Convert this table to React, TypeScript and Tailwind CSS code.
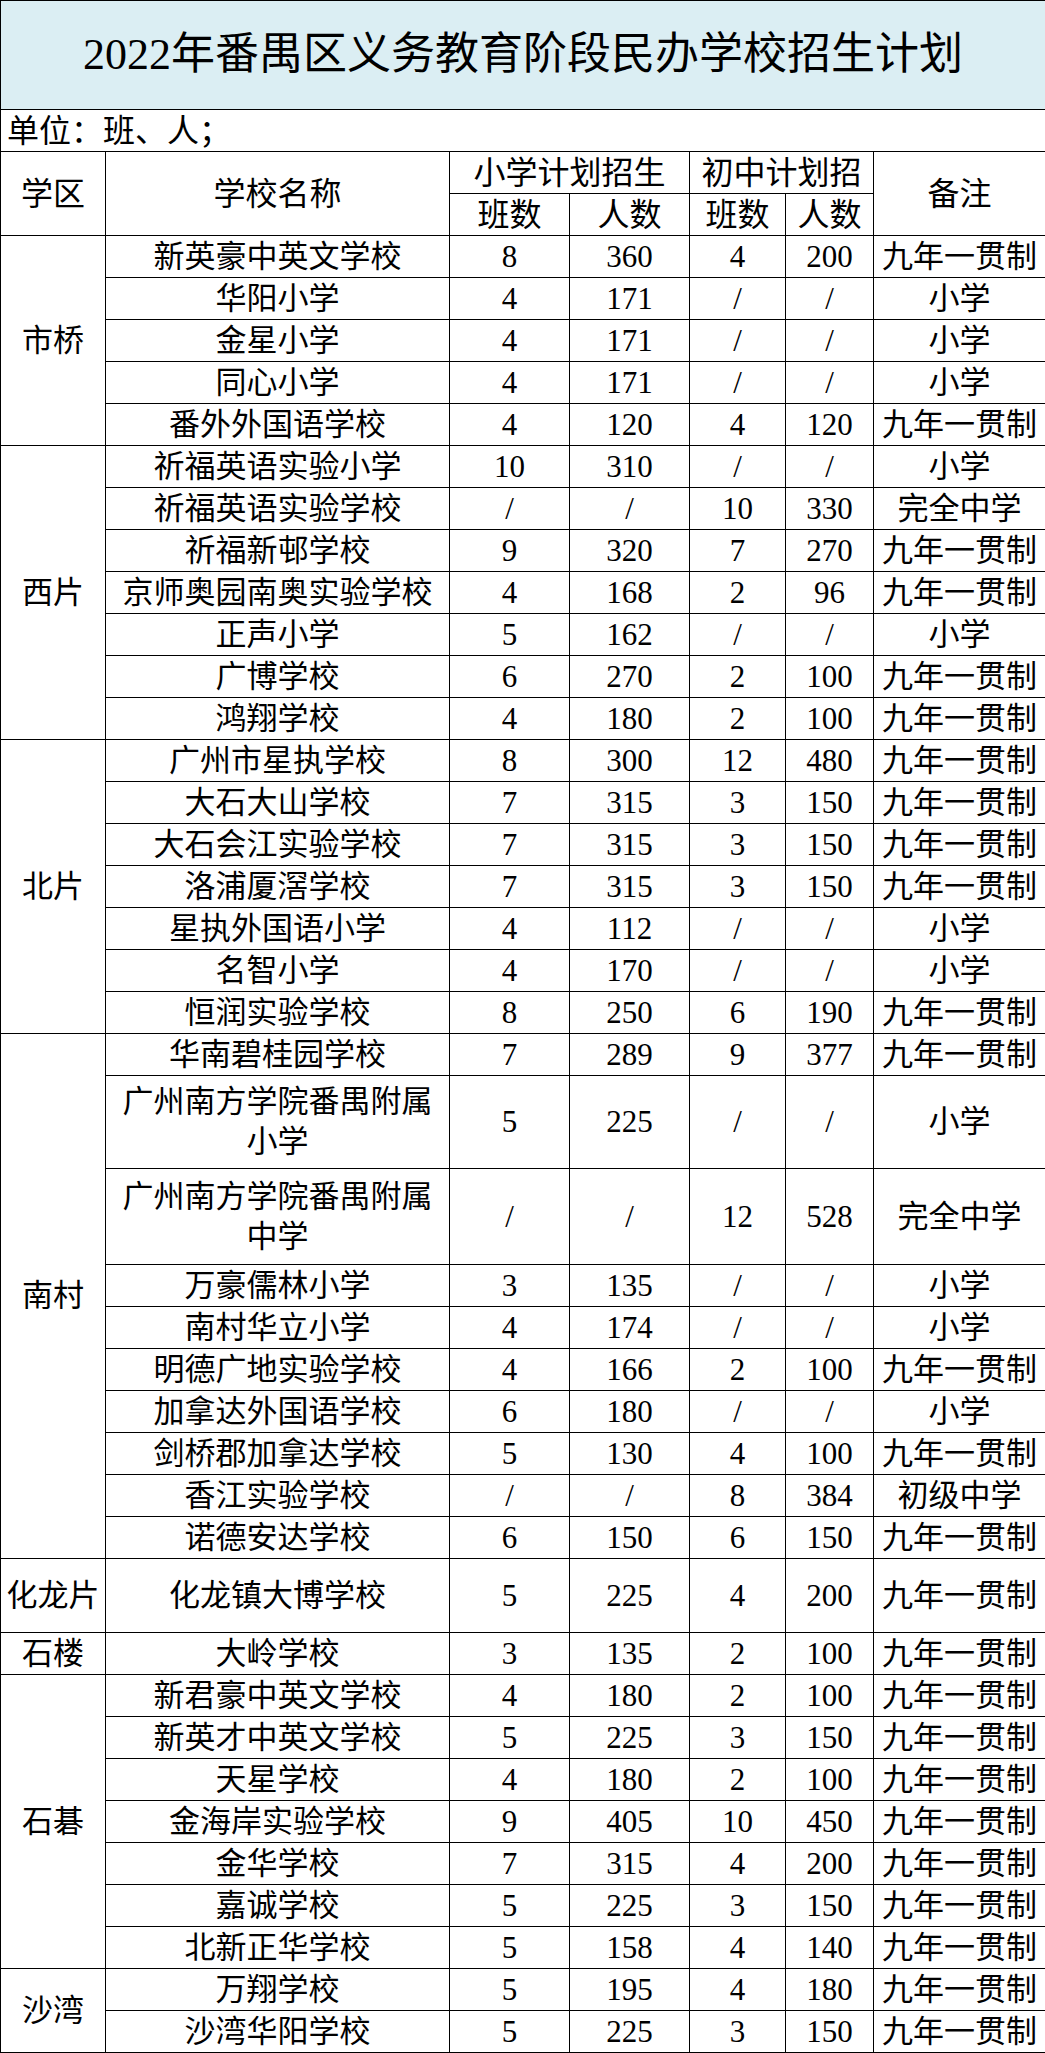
import React from "react";

type Row = { n: React.ReactNode; a: string; b: string; c: string; d: string; note: string; h?: string };
type Group = { district: string; rows: Row[] };

const R = (n: React.ReactNode, a: string, b: string, c: string, d: string, note: string, h?: string): Row => ({ n, a, b, c, d, note, h });
const NY = "九年一贯制";
const XX = "小学";

const groups: Group[] = [
  {
    district: "市桥",
    rows: [
      R("新英豪中英文学校", "8", "360", "4", "200", NY),
      R("华阳小学", "4", "171", "/", "/", XX),
      R("金星小学", "4", "171", "/", "/", XX),
      R("同心小学", "4", "171", "/", "/", XX),
      R("番外外国语学校", "4", "120", "4", "120", NY),
    ],
  },
  {
    district: "西片",
    rows: [
      R("祈福英语实验小学", "10", "310", "/", "/", XX),
      R("祈福英语实验学校", "/", "/", "10", "330", "完全中学"),
      R("祈福新邨学校", "9", "320", "7", "270", NY),
      R("京师奥园南奥实验学校", "4", "168", "2", "96", NY),
      R("正声小学", "5", "162", "/", "/", XX),
      R("广博学校", "6", "270", "2", "100", NY),
      R("鸿翔学校", "4", "180", "2", "100", NY),
    ],
  },
  {
    district: "北片",
    rows: [
      R("广州市星执学校", "8", "300", "12", "480", NY),
      R("大石大山学校", "7", "315", "3", "150", NY),
      R("大石会江实验学校", "7", "315", "3", "150", NY),
      R("洛浦厦滘学校", "7", "315", "3", "150", NY),
      R("星执外国语小学", "4", "112", "/", "/", XX),
      R("名智小学", "4", "170", "/", "/", XX),
      R("恒润实验学校", "8", "250", "6", "190", NY),
    ],
  },
  {
    district: "南村",
    rows: [
      R("华南碧桂园学校", "7", "289", "9", "377", NY),
      R(<>广州南方学院番禺附属<br />小学</>, "5", "225", "/", "/", XX, "h-[93px]"),
      R(<>广州南方学院番禺附属<br />中学</>, "/", "/", "12", "528", "完全中学", "h-[96px]"),
      R("万豪儒林小学", "3", "135", "/", "/", XX),
      R("南村华立小学", "4", "174", "/", "/", XX),
      R("明德广地实验学校", "4", "166", "2", "100", NY),
      R("加拿达外国语学校", "6", "180", "/", "/", XX),
      R("剑桥郡加拿达学校", "5", "130", "4", "100", NY),
      R("香江实验学校", "/", "/", "8", "384", "初级中学"),
      R("诺德安达学校", "6", "150", "6", "150", NY),
    ],
  },
  {
    district: "化龙片",
    rows: [R("化龙镇大博学校", "5", "225", "4", "200", NY, "h-[74px]")],
  },
  {
    district: "石楼",
    rows: [R("大岭学校", "3", "135", "2", "100", NY)],
  },
  {
    district: "石碁",
    rows: [
      R("新君豪中英文学校", "4", "180", "2", "100", NY),
      R("新英才中英文学校", "5", "225", "3", "150", NY),
      R("天星学校", "4", "180", "2", "100", NY),
      R("金海岸实验学校", "9", "405", "10", "450", NY),
      R("金华学校", "7", "315", "4", "200", NY),
      R("嘉诚学校", "5", "225", "3", "150", NY),
      R("北新正华学校", "5", "158", "4", "140", NY),
    ],
  },
  {
    district: "沙湾",
    rows: [
      R("万翔学校", "5", "195", "4", "180", NY),
      R("沙湾华阳学校", "5", "225", "3", "150", NY),
    ],
  },
];

const td = "border border-black p-0 text-center align-middle leading-[40px] whitespace-nowrap overflow-hidden";
const th = "border border-black p-0 text-center align-middle leading-[40px] text-[32px] font-normal whitespace-nowrap overflow-hidden";

export default function App() {
  return (
    <div className="w-[1045px] bg-white text-black font-['Liberation_Serif','Noto_Sans_CJK_SC',serif]">
      <table className="w-[1045px] table-fixed border-collapse text-[31px]">
        <colgroup>
          <col className="w-[105px]" />
          <col className="w-[344px]" />
          <col className="w-[120px]" />
          <col className="w-[120px]" />
          <col className="w-[96px]" />
          <col className="w-[88px]" />
          <col className="w-[172px]" />
        </colgroup>
        <tbody>
          <tr className="h-[109px]">
            <td colSpan={7} className="border border-black bg-[#dbeef3] p-0 text-center align-middle text-[44px] leading-[50px]">
              2022年番禺区义务教育阶段民办学校招生计划
            </td>
          </tr>
          <tr className="h-[42px]">
            <td colSpan={7} className="border border-black p-0 pl-[6px] text-left align-middle text-[32px] leading-[40px]">
              单位：班、人；
            </td>
          </tr>
          <tr className="h-[42px]">
            <th rowSpan={2} className={th}>学区</th>
            <th rowSpan={2} className={th}>学校名称</th>
            <th colSpan={2} className={th}>小学计划招生</th>
            <th colSpan={2} className={th}>初中计划招</th>
            <th rowSpan={2} className={th}>备注</th>
          </tr>
          <tr className="h-[42px]">
            <th className={th}>班数</th>
            <th className={th}>人数</th>
            <th className={th}>班数</th>
            <th className={th}>人数</th>
          </tr>
          {groups.map((g) =>
            g.rows.map((r, i) => (
              <tr key={g.district + i} className={r.h ?? "h-[42px]"}>
                {i === 0 && (
                  <td rowSpan={g.rows.length} className={td}>
                    {g.district}
                  </td>
                )}
                <td className={td}>{r.n}</td>
                <td className={td}>{r.a}</td>
                <td className={td}>{r.b}</td>
                <td className={td}>{r.c}</td>
                <td className={td}>{r.d}</td>
                <td className={td}>{r.note}</td>
              </tr>
            ))
          )}
        </tbody>
      </table>
    </div>
  );
}
